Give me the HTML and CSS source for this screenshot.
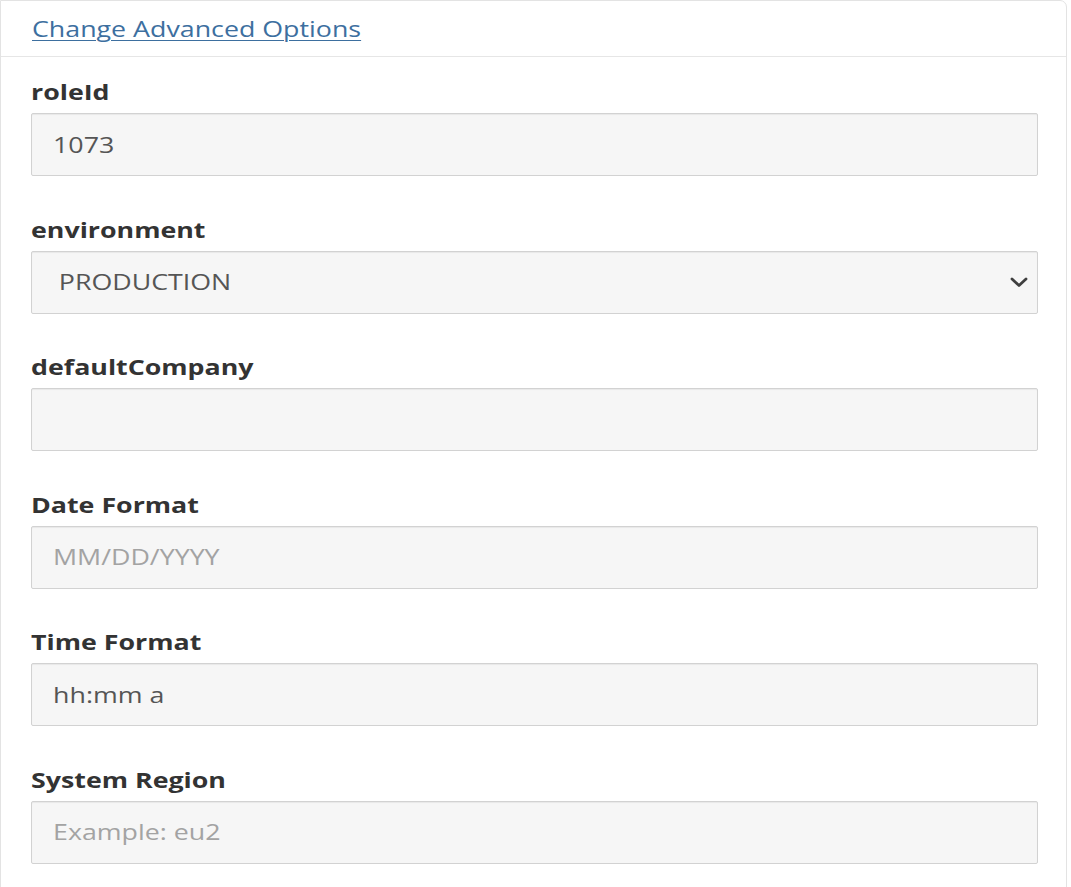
FILE: index.html
```html
<!DOCTYPE html>
<html>
<head>
<meta charset="utf-8">
<link rel="stylesheet" href="styles.css">
</head>
<body>
<div class="panel">
  <div class="panel-head">
    <a class="adv-link" href="#"><span class="wide">Change Advanced Options</span></a>
  </div>
  <div class="panel-body">
    <div class="field">
      <label class="lbl"><span class="wide">roleId</span></label>
      <div class="box"><input class="ctl" type="text" value="1073"></div>
    </div>
    <div class="field">
      <label class="lbl"><span class="wide">environment</span></label>
      <div class="box">
        <select class="ctl sel">
          <option>PRODUCTION</option>
        </select>
        <svg class="chev" width="18" height="11" viewBox="0 0 18 11"><path d="M2 2 L9 8.5 L16 2" fill="none" stroke="#3f3f3f" stroke-width="2.8" stroke-linecap="round" stroke-linejoin="round"/></svg>
      </div>
    </div>
    <div class="field">
      <label class="lbl"><span class="wide">defaultCompany</span></label>
      <div class="box"><input class="ctl" type="text" value=""></div>
    </div>
    <div class="field">
      <label class="lbl"><span class="wide">Date Format</span></label>
      <div class="box"><input class="ctl" type="text" placeholder="MM/DD/YYYY"></div>
    </div>
    <div class="field">
      <label class="lbl"><span class="wide">Time Format</span></label>
      <div class="box"><input class="ctl" type="text" value="hh:mm a"></div>
    </div>
    <div class="field">
      <label class="lbl"><span class="wide">System Region</span></label>
      <div class="box"><input class="ctl" type="text" placeholder="Example: eu2"></div>
    </div>
  </div>
</div>
</body>
</html>
```

FILE: styles.css
```css
html, body {
  margin: 0;
  padding: 0;
  background: #ffffff;
}
body {
  font-family: "Open Sans", "Liberation Sans", sans-serif;
  font-size: 21px;
  color: #333333;
}
.wide {
  display: inline-block;
  transform: scaleX(1.275);
  transform-origin: 0 50%;
}
.panel {
  width: 1067px;
  border: 1px solid #e3e3e3;
  border-top-right-radius: 7px;
  min-height: 900px;
  box-sizing: border-box;
}
.panel-head {
  height: 56px;
  box-sizing: border-box;
  padding: 13px 31px 0;
  border-bottom: 1px solid #e6e6e6;
  line-height: 30px;
}
.adv-link {
  color: #3d6f9f;
  text-decoration: none;
  font-size: 21px;
}
.adv-link .wide {
  text-decoration: underline;
  text-decoration-thickness: 1px;
  text-underline-offset: 3px;
}
.panel-body {
  padding: 20px 28px 0 30px;
}
.field {
  display: flex;
  flex-direction: column;
  margin-bottom: 38.6px;
}
.lbl {
  font-weight: 700;
  line-height: 30px;
  color: #333333;
  margin-bottom: 6px;
}
.box {
  position: relative;
  height: 63px;
  box-sizing: border-box;
  border: 1px solid #d2d2d2;
  border-radius: 2px;
  background: #f6f6f6;
  box-shadow: inset 0 1px 1px rgba(0,0,0,0.06);
  overflow: hidden;
}
.ctl {
  display: block;
  height: 61px;
  width: calc(100% / 1.275);
  box-sizing: border-box;
  border: 0;
  background: transparent;
  padding: 0 0 0 16.5px;
  font-family: "Open Sans", "Liberation Sans", sans-serif;
  font-size: 21px;
  color: #555555;
  outline: none;
  margin: 0;
  transform: scaleX(1.275);
  transform-origin: 0 50%;
}
.ctl::placeholder {
  color: #a3a3a3;
}
.sel {
  appearance: none;
  -webkit-appearance: none;
  padding-left: 21px;
}
.chev {
  position: absolute;
  right: 9px;
  top: 25px;
  pointer-events: none;
}
```
